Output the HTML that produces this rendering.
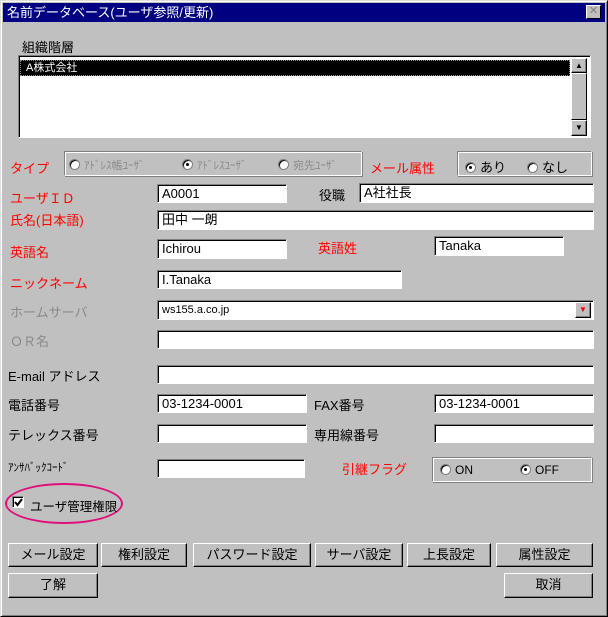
<!DOCTYPE html>
<html><head><meta charset="utf-8"><style>
*{box-sizing:border-box;margin:0;padding:0}
body{width:608px;height:617px;background:#c0c0c0;font-family:"Liberation Sans","Noto Sans CJK JP",sans-serif;font-size:12px;position:relative;overflow:hidden}
.a{position:absolute;white-space:nowrap}
.win{left:0;top:0;width:608px;height:617px;border:1px solid;border-color:#dfdfdf #000 #000 #dfdfdf;box-shadow:inset 1px 1px #fff,inset -1px -1px #808080}
.title{left:3px;top:3px;width:602px;height:19px;background:#000080;color:#fff;font-size:13px;line-height:19px;padding-left:4px}
.close{left:586px;top:5px;width:15px;height:14px;background:#c0c0c0;border:1px solid;border-color:#fff #000 #000 #fff;color:#808080;font-size:11px;line-height:11px;text-align:center}
.in{background:#fff;border:1px solid;border-color:#808080 #fff #fff #808080;box-shadow:inset 1px 1px #000;padding-left:4px;font-size:13px;line-height:17px}
.red{color:#f00}.gray{color:#8a8a8a}
.grp{border:1px solid;border-color:#808080 #fff #fff #808080;box-shadow:inset 1px 1px #fff,1px 1px #808080}
.rad{display:inline-block;width:11px;height:11px;border-radius:50%;background:#fff;border:1px solid #808080;box-shadow:inset 1px 1px #000;vertical-align:-1px;margin-right:4px;position:relative}
.rad.on::after{content:"";position:absolute;left:3px;top:3px;width:3px;height:3px;background:#000;border-radius:50%}
.btn{background:#c0c0c0;border:1px solid;border-color:#fff #000 #000 #fff;box-shadow:inset -1px -1px #808080;text-align:center;font-size:13px;line-height:21px}
.lbl{font-size:13px}
</style></head><body>
<div class="a win"></div>
<div class="a title">名前データベース(ユーザ参照/更新)</div>
<div class="a close">✕</div>
<div class="a lbl" style="left:22px;top:37px">組織階層</div>
<div class="a" style="left:18px;top:55px;width:573px;height:83px;background:#fff;border:1px solid;border-color:#808080 #fff #fff #808080;box-shadow:inset 1px 1px #000"></div>
<div class="a" style="left:20px;top:60px;width:550px;height:16px;background:#000;color:#fff;font-size:11px;line-height:16px;padding-left:6px;outline:1px dotted #888;outline-offset:-1px">A株式会社</div>
<div class="a" style="left:571px;top:58px;width:16px;height:78px;background:#c0c0c0"></div>
<div class="a btn" style="left:571px;top:58px;width:16px;height:15px;font-size:8px;line-height:13px">▲</div>
<div class="a" style="left:571px;top:73px;width:16px;height:47px;border:1px solid;border-color:#fff #000 #000 #fff"></div>
<div class="a btn" style="left:571px;top:120px;width:16px;height:16px;font-size:8px;line-height:14px">▼</div>

<div class="a red lbl" style="left:10px;top:158px">タイプ</div>
<div class="a grp" style="left:64px;top:151px;width:298px;height:25px"></div>
<div class="a gray" style="left:69px;top:157px;font-size:11px"><span class="rad"></span>ｱﾄﾞﾚｽ帳ﾕｰｻﾞ</div>
<div class="a gray" style="left:182px;top:157px;font-size:11px"><span class="rad on"></span>ｱﾄﾞﾚｽﾕｰｻﾞ</div>
<div class="a gray" style="left:278px;top:157px;font-size:11px"><span class="rad"></span>宛先ﾕｰｻﾞ</div>
<div class="a red lbl" style="left:370px;top:158px">メール属性</div>
<div class="a grp" style="left:457px;top:151px;width:135px;height:25px"></div>
<div class="a" style="left:465px;top:157px;font-size:13px"><span class="rad on"></span>あり</div>
<div class="a" style="left:527px;top:157px;font-size:13px"><span class="rad"></span>なし</div>

<div class="a red lbl" style="left:10px;top:188px">ユーザＩＤ</div>
<div class="a in" style="left:157px;top:184px;width:130px;height:19px">A0001</div>
<div class="a lbl" style="left:319px;top:185px">役職</div>
<div class="a in" style="left:359px;top:183px;width:235px;height:20px">A社社長</div>
<div class="a red lbl" style="left:10px;top:210px">氏名(日本語)</div>
<div class="a in" style="left:157px;top:210px;width:437px;height:20px">田中 一朗</div>
<div class="a red lbl" style="left:10px;top:242px">英語名</div>
<div class="a in" style="left:157px;top:239px;width:130px;height:20px">Ichirou</div>
<div class="a red lbl" style="left:318px;top:238px">英語姓</div>
<div class="a in" style="left:434px;top:236px;width:130px;height:20px">Tanaka</div>
<div class="a red lbl" style="left:10px;top:273px">ニックネーム</div>
<div class="a in" style="left:157px;top:270px;width:245px;height:19px">I.Tanaka</div>
<div class="a gray lbl" style="left:10px;top:302px">ホームサーバ</div>
<div class="a in" style="left:157px;top:300px;width:437px;height:20px;font-size:11px;line-height:18px">ws155.a.co.jp</div>
<div class="a btn" style="left:575px;top:302px;width:16px;height:16px;color:#f00;font-size:8px;line-height:14px">▼</div>
<div class="a gray lbl" style="left:10px;top:331px">ＯＲ名</div>
<div class="a in" style="left:157px;top:330px;width:437px;height:19px"></div>
<div class="a lbl" style="left:8px;top:366px">E-mail アドレス</div>
<div class="a in" style="left:157px;top:365px;width:437px;height:19px"></div>
<div class="a lbl" style="left:8px;top:395px">電話番号</div>
<div class="a in" style="left:157px;top:394px;width:150px;height:19px">03-1234-0001</div>
<div class="a lbl" style="left:314px;top:395px">FAX番号</div>
<div class="a in" style="left:434px;top:394px;width:160px;height:19px">03-1234-0001</div>
<div class="a lbl" style="left:8px;top:425px">テレックス番号</div>
<div class="a in" style="left:157px;top:424px;width:150px;height:19px"></div>
<div class="a lbl" style="left:314px;top:425px">専用線番号</div>
<div class="a in" style="left:434px;top:424px;width:160px;height:19px"></div>
<div class="a" style="left:8px;top:459px;font-size:11px">ｱﾝｻﾊﾞｯｸｺｰﾄﾞ</div>
<div class="a in" style="left:157px;top:459px;width:148px;height:19px"></div>
<div class="a red lbl" style="left:342px;top:459px">引継フラグ</div>
<div class="a grp" style="left:432px;top:457px;width:160px;height:25px"></div>
<div class="a" style="left:440px;top:463px;font-size:12px"><span class="rad"></span>ON</div>
<div class="a" style="left:520px;top:463px;font-size:12px"><span class="rad on"></span>OFF</div>
<div class="a" style="left:5px;top:483px;width:118px;height:41px;border:2px solid #e0107a;border-radius:50%"></div>
<div class="a" style="left:12px;top:496px;width:12px;height:12px;background:#fff;border:1px solid;border-color:#808080 #fff #fff #808080;box-shadow:inset 1px 1px #000"></div>
<svg class="a" style="left:14px;top:498px" width="9" height="9" viewBox="0 0 9 9"><path d="M1 4 L3.5 7 L8 1" stroke="#000" stroke-width="2" fill="none"/></svg>
<div class="a lbl" style="left:30px;top:496px;font-size:12.5px">ユーザ管理権限</div>

<div class="a btn" style="left:8px;top:543px;width:90px;height:24px">メール設定</div>
<div class="a btn" style="left:101px;top:543px;width:86px;height:24px">権利設定</div>
<div class="a btn" style="left:193px;top:543px;width:118px;height:24px">パスワード設定</div>
<div class="a btn" style="left:315px;top:543px;width:88px;height:24px">サーバ設定</div>
<div class="a btn" style="left:407px;top:543px;width:84px;height:24px">上長設定</div>
<div class="a btn" style="left:496px;top:543px;width:97px;height:24px">属性設定</div>
<div class="a btn" style="left:8px;top:573px;width:90px;height:25px">了解</div>
<div class="a btn" style="left:504px;top:573px;width:89px;height:25px">取消</div>
</body></html>
